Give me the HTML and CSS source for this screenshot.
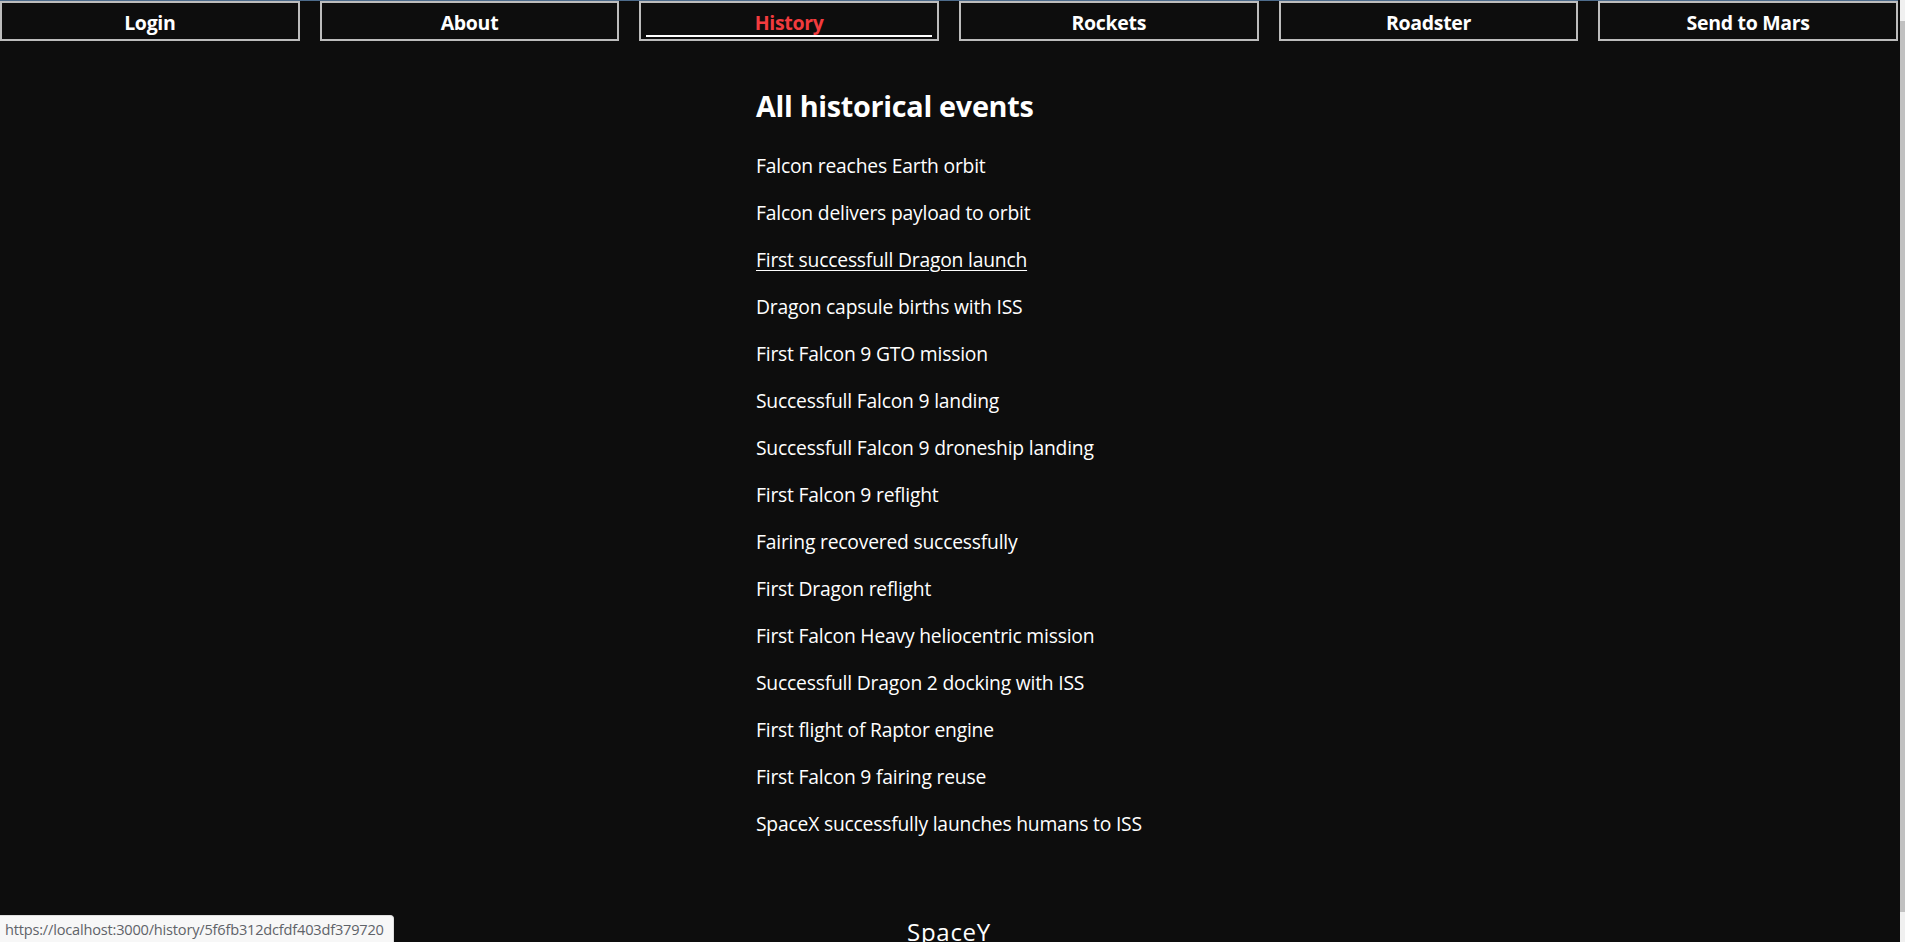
FILE: index.html
```html
<!DOCTYPE html>
<html lang="en">
<head>
<meta charset="utf-8">
<title>SpaceY - History</title>
<link rel="stylesheet" href="styles.css">
</head>
<body>
<nav class="nav">
  <button class="nav-btn">Login</button>
  <button class="nav-btn">About</button>
  <button class="nav-btn nav-btn--active">History</button>
  <button class="nav-btn">Rockets</button>
  <button class="nav-btn">Roadster</button>
  <button class="nav-btn">Send to Mars</button>
</nav>
<main class="content">
  <h2 class="title">All historical events</h2>
  <ul class="events">
    <li class="event">Falcon reaches Earth orbit</li>
    <li class="event">Falcon delivers payload to orbit</li>
    <li class="event event--hover">First successfull Dragon launch</li>
    <li class="event">Dragon capsule births with ISS</li>
    <li class="event">First Falcon 9 GTO mission</li>
    <li class="event">Successfull Falcon 9 landing</li>
    <li class="event">Successfull Falcon 9 droneship landing</li>
    <li class="event">First Falcon 9 reflight</li>
    <li class="event">Fairing recovered successfully</li>
    <li class="event">First Dragon reflight</li>
    <li class="event">First Falcon Heavy heliocentric mission</li>
    <li class="event">Successfull Dragon 2 docking with ISS</li>
    <li class="event">First flight of Raptor engine</li>
    <li class="event">First Falcon 9 fairing reuse</li>
    <li class="event">SpaceX successfully launches humans to ISS</li>
  </ul>
</main>
<footer class="footer">SpaceY</footer>
<div class="status">https://localhost:3000/history/5f6fb312dcfdf403df379720</div>
<div class="scrollbar"><div class="scrollbar-thumb"></div></div>
</body>
</html>
```
FILE: styles.css
```css
html {
  overflow: hidden;
  background: #0d0d0d;
}
body {
  margin: 0 7px 0 0;
  border-top: 1px solid #4d6b8b;
  background: #0d0d0d;
  color: #ffffff;
  font-family: "Open Sans", "Noto Sans", sans-serif;
}
.nav {
  display: grid;
  grid-template-columns: repeat(6, 1fr);
  column-gap: 20px;
}
.nav-btn {
  position: relative;
  height: 40px;
  margin: 0;
  padding: 4px 0 0;
  border: 2px solid #bcbcbc;
  background: #0d0d0d;
  color: #ffffff;
  font-family: "Open Sans", "Noto Sans", sans-serif;
  font-weight: 700;
  font-size: 19.5px;
  letter-spacing: -0.3px;
  line-height: 26px;
  cursor: pointer;
}
.nav-btn--active {
  color: #f23b3e;
}
.nav-btn--active::after {
  content: "";
  position: absolute;
  left: 5px;
  right: 5px;
  bottom: 2px;
  height: 2px;
  background: #ffffff;
}
.content {
  margin-left: 756px;
  padding-top: 46px;
}
.title {
  margin: 0 0 27px;
  font-size: 28.8px;
  line-height: 38px;
  font-weight: 700;
  letter-spacing: -0.3px;
}
.events {
  list-style: none;
  margin: 0;
  padding: 0;
}
.event {
  margin: 0 0 20px;
  font-size: 19.3px;
  line-height: 27px;
  letter-spacing: -0.2px;
}
.event--hover {
  text-decoration: underline;
  text-underline-offset: 3px;
}
.footer {
  margin-top: 78px;
  text-align: center;
  font-size: 24px;
  letter-spacing: 0.7px;
}
.status {
  position: fixed;
  left: 0;
  bottom: 0;
  width: 388px;
  height: 26px;
  padding-left: 5px;
  background: #f7f7f7;
  border-top: 1px solid #dedede;
  border-right: 1px solid #dedede;
  border-top-right-radius: 4px;
  color: #5f6369;
  font-size: 14.6px;
  line-height: 26px;
  letter-spacing: -0.2px;
  white-space: nowrap;
}
.scrollbar {
  position: fixed;
  top: 0;
  right: 0;
  width: 5px;
  height: 100%;
  background: #f0f0f0;
}
.scrollbar-thumb {
  margin-top: 21px;
  height: 891px;
  background: #c1c1c1;
}
```
